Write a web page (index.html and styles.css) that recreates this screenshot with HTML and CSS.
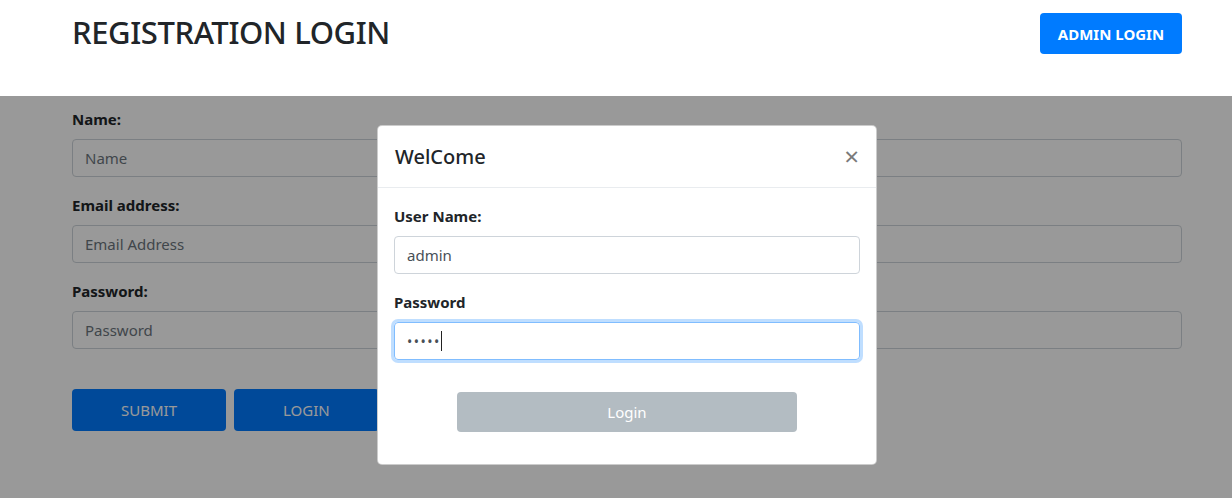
FILE: index.html
```html
<!DOCTYPE html>
<html lang="en">
<head>
<meta charset="utf-8">
<title>Registration Login</title>
<link rel="stylesheet" href="styles.css">
</head>
<body>
<header class="topbar">
  <h1 class="title">REGISTRATION LOGIN</h1>
  <button class="btn btn-admin" type="button">ADMIN LOGIN</button>
</header>
<main class="main">
  <form class="reg-form">
    <div class="field">
      <label class="label">Name:</label>
      <input class="input" type="text" placeholder="Name">
    </div>
    <div class="field">
      <label class="label">Email address:</label>
      <input class="input" type="email" placeholder="Email Address">
    </div>
    <div class="field">
      <label class="label">Password:</label>
      <input class="input" type="password" placeholder="Password">
    </div>
    <div class="actions">
      <button class="btn btn-blue" type="button">SUBMIT</button>
      <button class="btn btn-blue" type="button">LOGIN</button>
    </div>
  </form>
  <div class="backdrop"></div>
  <div class="modal">
    <div class="modal-header">
      <h2 class="modal-title">WelCome</h2>
      <span class="close">&times;</span>
    </div>
    <div class="modal-body">
      <div class="mfield">
        <label class="label">User Name:</label>
        <div class="minput">admin</div>
      </div>
      <div class="mfield">
        <label class="label">Password</label>
        <div class="minput focus"><span class="dots">•••••</span><span class="caret"></span></div>
      </div>
      <div class="mactions">
        <button class="btn btn-gray" type="button">Login</button>
      </div>
    </div>
  </div>
</main>
</body>
</html>
```
FILE: styles.css
```css
* { box-sizing: border-box; }
html, body { margin: 0; padding: 0; }
body {
  font-family: "Noto Sans", "Open Sans", sans-serif;
  color: #212529;
  background: #fff;
  width: 1232px;
  height: 498px;
  overflow: hidden;
}
.topbar {
  height: 96px;
  padding: 0 50px 0 72px;
  display: flex;
  justify-content: space-between;
  align-items: flex-start;
  background: #fff;
}
.title {
  margin: 13px 0 0;
  font-size: 31px;
  font-weight: 500;
  letter-spacing: -0.4px;
  line-height: 38px;
}
.btn {
  border: none;
  border-radius: 4px;
  font-family: inherit;
  cursor: pointer;
}
.btn-admin {
  margin-top: 13px;
  width: 142px;
  height: 41px;
  background: #007bff;
  color: #fff;
  font-weight: 700;
  font-size: 15px;
}
.main {
  position: relative;
  height: 402px;
  padding: 11px 50px 0 72px;
}
.field { margin-bottom: 16px; }
.label {
  display: block;
  font-weight: 700;
  font-size: 15px;
  line-height: 24px;
  margin-bottom: 8px;
}
.input {
  display: block;
  width: 100%;
  height: 38px;
  border: 1px solid #ced4da;
  border-radius: 4px;
  padding: 0 12px;
  font-family: inherit;
  font-size: 15px;
  color: #495057;
}
.input::placeholder { color: #6c757d; }
.actions {
  display: flex;
  gap: 8px;
  margin-top: 40px;
}
.btn-blue {
  padding: 0 49px;
  height: 42px;
  background: #007bff;
  color: #fff;
  font-size: 15px;
}
.backdrop {
  position: absolute;
  inset: 0;
  background: rgba(0, 0, 0, 0.4);
}
.modal {
  position: absolute;
  left: 377px;
  top: 29px;
  width: 500px;
  height: 340px;
  background: #fff;
  border: 1px solid rgba(0, 0, 0, 0.2);
  border-radius: 5px;
}
.modal-header {
  height: 62px;
  display: flex;
  align-items: center;
  justify-content: space-between;
  padding: 0 17px;
  border-bottom: 1px solid #e9ecef;
}
.modal-title {
  margin: 0;
  font-size: 20px;
  font-weight: 500;
}
.close {
  font-size: 26px;
  font-weight: 400;
  color: #7a7a7a;
  line-height: 1;
  margin-top: -2px;
}
.modal-body { padding: 16px 16px 0 16px; }
.mfield { margin-bottom: 16px; }
.minput {
  height: 38px;
  border: 1px solid #ced4da;
  border-radius: 4px;
  padding: 0 12px;
  font-size: 15px;
  color: #495057;
  display: flex;
  align-items: center;
}
.minput.focus {
  border-color: #80bdff;
  box-shadow: 0 0 0 3px rgba(0, 123, 255, 0.25);
}
.dots { letter-spacing: 1.5px; font-size: 14px; }
.caret {
  display: inline-block;
  width: 1px;
  height: 20px;
  background: #222;
}
.mactions {
  display: flex;
  justify-content: center;
  padding-top: 16px;
}
.btn-gray {
  width: 340px;
  height: 40px;
  background: #b3bcc2;
  color: #fff;
  font-size: 15px;
}
```
